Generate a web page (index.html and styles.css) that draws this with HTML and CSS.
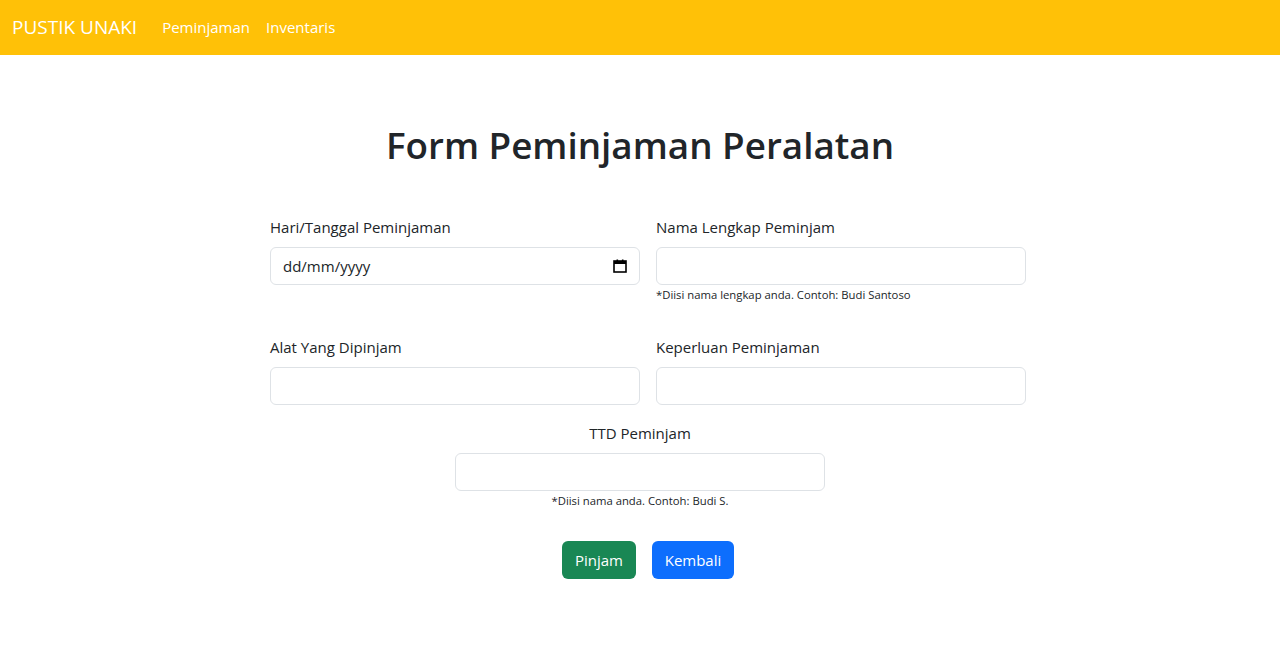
FILE: index.html
```html
<!DOCTYPE html>
<html lang="id">
<head>
<meta charset="utf-8">
<title>Form Peminjaman Peralatan</title>
<link rel="stylesheet" href="styles.css">
</head>
<body>
<nav class="navbar">
  <a class="brand" href="#">PUSTIK UNAKI</a>
  <a class="nav-link" href="#">Peminjaman</a>
  <a class="nav-link" href="#">Inventaris</a>
</nav>
<main class="container">
  <h1 class="title">Form Peminjaman Peralatan</h1>
  <form class="form">
    <div class="row row-first">
      <div class="col">
        <label class="label">Hari/Tanggal Peminjaman</label>
        <div class="input date-input"><span class="placeholder">dd/mm/yyyy</span>
          <svg class="cal" width="14" height="14" viewBox="0 0 14 14"><rect x="1" y="2" width="12" height="11" fill="none" stroke="#000" stroke-width="1.6"/><rect x="1" y="2" width="12" height="3" fill="#000"/><rect x="3.5" y="0.5" width="1.6" height="2" fill="#000"/><rect x="8.9" y="0.5" width="1.6" height="2" fill="#000"/></svg>
        </div>
      </div>
      <div class="col">
        <label class="label">Nama Lengkap Peminjam</label>
        <div class="input"></div>
        <div class="help">*Diisi nama lengkap anda. Contoh: Budi Santoso</div>
      </div>
    </div>
    <div class="row row-second">
      <div class="col">
        <label class="label">Alat Yang Dipinjam</label>
        <div class="input"></div>
      </div>
      <div class="col">
        <label class="label">Keperluan Peminjaman</label>
        <div class="input"></div>
      </div>
    </div>
    <div class="center-field">
      <label class="label">TTD Peminjam</label>
      <div class="input"></div>
      <div class="help">*Diisi nama anda. Contoh: Budi S.</div>
    </div>
    <div class="buttons">
      <button type="button" class="btn btn-green">Pinjam</button>
      <button type="button" class="btn btn-blue">Kembali</button>
    </div>
  </form>
</main>
</body>
</html>
```
FILE: styles.css
```css
* { box-sizing: border-box; }
body {
  margin: 0;
  font-family: "Open Sans", "Noto Sans", sans-serif;
  color: #212529;
  background: #fff;
  font-size: 16px;
  line-height: 1.5;
}
.navbar {
  height: 55px;
  background: #ffc107;
  display: flex;
  align-items: center;
  padding: 0 12px;
}
.brand {
  color: #fff;
  text-decoration: none;
  font-size: 19px;
  margin-right: 25px;
}
.nav-link {
  color: #fff;
  text-decoration: none;
  font-size: 15px;
  margin-right: 16px;
}
.container {
  width: 772px;
  margin: 0 auto;
  padding-top: 66px;
}
.title {
  margin: 0;
  font-size: 36.8px;
  font-weight: 600;
  line-height: 48px;
  text-align: center;
}
.form { margin-top: 46px; }
.row { display: flex; }
.col { flex: 1; padding-left: 16px; }
.row-first { height: 120px; }
.row-second { height: 86px; }
.label {
  display: block;
  font-size: 15px;
  line-height: 24px;
  margin-bottom: 8px;
}
.input {
  height: 38px;
  border: 1px solid #dee2e6;
  border-radius: 6px;
  background: #fff;
}
.date-input {
  display: flex;
  align-items: center;
  justify-content: space-between;
  padding: 0 12px;
}
.placeholder { font-size: 15px; color: #212529; }
.help {
  font-size: 11.3px;
  line-height: 16px;
  margin-top: 2px;
}
.center-field {
  width: 370px;
  margin-left: 201px;
  text-align: center;
}
.buttons {
  display: flex;
  justify-content: center;
  margin-top: 32px;
}
.btn {
  height: 38px;
  border: none;
  border-radius: 6px;
  color: #fff;
  font-family: inherit;
  font-size: 15px;
  padding: 0 12px;
  margin-left: 16px;
}
.btn-green { background: #198754; width: 74px; }
.btn-blue { background: #0d6efd; width: 82px; }
```
